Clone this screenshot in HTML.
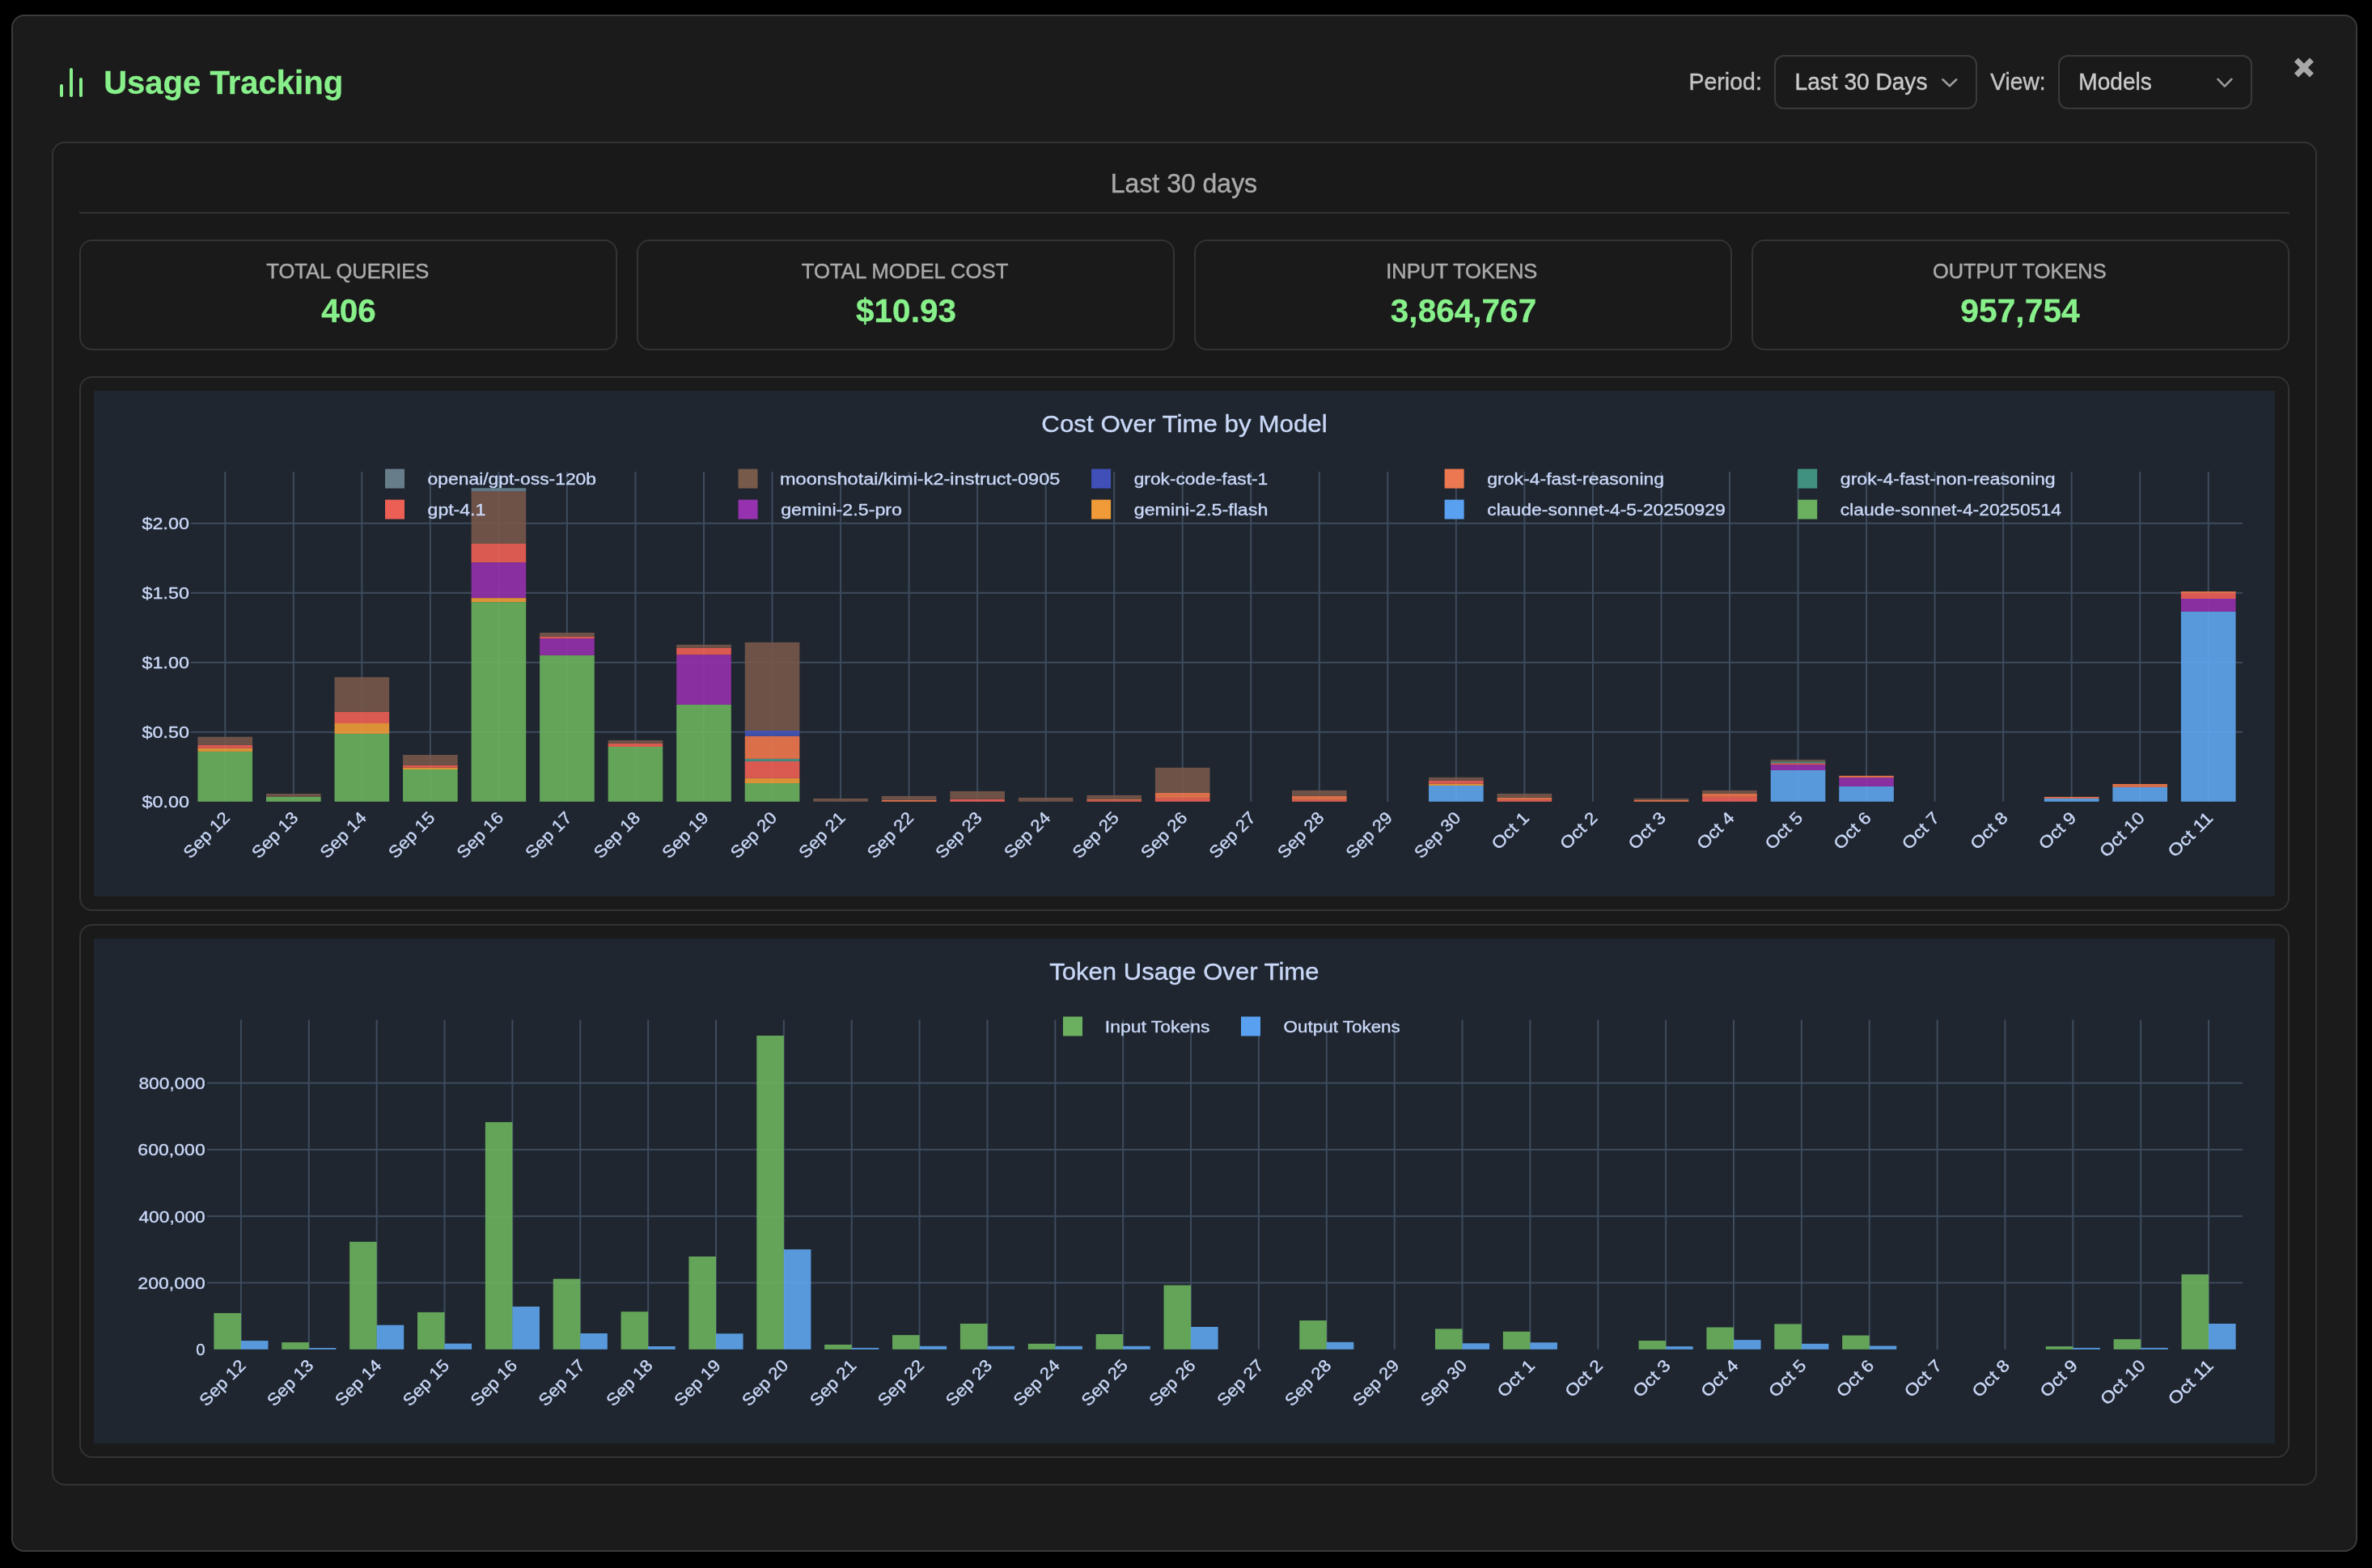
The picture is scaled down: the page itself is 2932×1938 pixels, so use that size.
<!DOCTYPE html>
<html><head><meta charset="utf-8"><title>Usage Tracking</title>
<style>
html,body{margin:0;padding:0;background:#000000;width:2932px;height:1938px;overflow:hidden;font-family:"Liberation Sans",sans-serif}
.box{position:absolute;box-sizing:border-box}
.modal{left:14px;top:18px;width:2900px;height:1900px;background:#1b1b1b;border:2px solid #3a3a3a;border-radius:16px}
.cont{left:64px;top:175px;width:2800px;height:1661px;background:#191919;border:2px solid #333333;border-radius:16px}
.divider{left:98px;top:262px;width:2732px;height:2px;background:#333333}
.card{top:296px;width:665px;height:137px;background:#1a1a1a;border:2px solid #333333;border-radius:16px}
.chart{left:98px;width:2732px;background:#1a1a1a;border:2px solid #333333;border-radius:16px}
.sel{top:68px;height:67px;background:#1a1a1a;border:2px solid #3a3a3a;border-radius:12px}
svg{position:absolute;left:0;top:0;will-change:transform}
text{font-family:"Liberation Sans"}
.ct{stroke:#cad8f8;stroke-width:0.35px}
</style></head><body>
<div class="box modal"></div>
<div class="box sel" style="left:2193px;width:251px"></div>
<div class="box sel" style="left:2544px;width:240px"></div>
<div class="box cont"></div>
<div class="box divider"></div>
<div class="box card" style="left:98px"></div>
<div class="box card" style="left:787px"></div>
<div class="box card" style="left:1476px"></div>
<div class="box card" style="left:2165px"></div>
<div class="box chart" style="top:465px;height:661px"></div>
<div class="box chart" style="top:1142px;height:660px"></div>
<svg width="2932" height="1938" viewBox="0 0 2932 1938">
<rect x="116" y="483" width="2696" height="625" fill="#1f2630"/>
<rect x="236.00" y="903.80" width="2536.00" height="2" fill="#3d4b5d"/>
<rect x="236.00" y="817.80" width="2536.00" height="2" fill="#3d4b5d"/>
<rect x="236.00" y="731.80" width="2536.00" height="2" fill="#3d4b5d"/>
<rect x="236.00" y="645.80" width="2536.00" height="2" fill="#3d4b5d"/>
<rect x="277.27" y="583" width="2" height="407.80" fill="#3d4b5d"/>
<rect x="361.80" y="583" width="2" height="407.80" fill="#3d4b5d"/>
<rect x="446.33" y="583" width="2" height="407.80" fill="#3d4b5d"/>
<rect x="530.87" y="583" width="2" height="407.80" fill="#3d4b5d"/>
<rect x="615.40" y="583" width="2" height="407.80" fill="#3d4b5d"/>
<rect x="699.93" y="583" width="2" height="407.80" fill="#3d4b5d"/>
<rect x="784.47" y="583" width="2" height="407.80" fill="#3d4b5d"/>
<rect x="869.00" y="583" width="2" height="407.80" fill="#3d4b5d"/>
<rect x="953.53" y="583" width="2" height="407.80" fill="#3d4b5d"/>
<rect x="1038.07" y="583" width="2" height="407.80" fill="#3d4b5d"/>
<rect x="1122.60" y="583" width="2" height="407.80" fill="#3d4b5d"/>
<rect x="1207.13" y="583" width="2" height="407.80" fill="#3d4b5d"/>
<rect x="1291.67" y="583" width="2" height="407.80" fill="#3d4b5d"/>
<rect x="1376.20" y="583" width="2" height="407.80" fill="#3d4b5d"/>
<rect x="1460.73" y="583" width="2" height="407.80" fill="#3d4b5d"/>
<rect x="1545.27" y="583" width="2" height="407.80" fill="#3d4b5d"/>
<rect x="1629.80" y="583" width="2" height="407.80" fill="#3d4b5d"/>
<rect x="1714.33" y="583" width="2" height="407.80" fill="#3d4b5d"/>
<rect x="1798.87" y="583" width="2" height="407.80" fill="#3d4b5d"/>
<rect x="1883.40" y="583" width="2" height="407.80" fill="#3d4b5d"/>
<rect x="1967.93" y="583" width="2" height="407.80" fill="#3d4b5d"/>
<rect x="2052.47" y="583" width="2" height="407.80" fill="#3d4b5d"/>
<rect x="2137.00" y="583" width="2" height="407.80" fill="#3d4b5d"/>
<rect x="2221.53" y="583" width="2" height="407.80" fill="#3d4b5d"/>
<rect x="2306.07" y="583" width="2" height="407.80" fill="#3d4b5d"/>
<rect x="2390.60" y="583" width="2" height="407.80" fill="#3d4b5d"/>
<rect x="2475.13" y="583" width="2" height="407.80" fill="#3d4b5d"/>
<rect x="2559.67" y="583" width="2" height="407.80" fill="#3d4b5d"/>
<rect x="2644.20" y="583" width="2" height="407.80" fill="#3d4b5d"/>
<rect x="2728.73" y="583" width="2" height="407.80" fill="#3d4b5d"/>
<rect x="244.45" y="928.90" width="67.63" height="61.90" fill="#6bb25e" fill-opacity="0.9"/>
<rect x="244.45" y="924.80" width="67.63" height="4.10" fill="#f19d38" fill-opacity="0.9"/>
<rect x="244.45" y="920.80" width="67.63" height="4.00" fill="#ee6056" fill-opacity="0.9"/>
<rect x="244.45" y="910.70" width="67.63" height="10.10" fill="#77584b" fill-opacity="0.9"/>
<rect x="328.99" y="984.90" width="67.63" height="5.90" fill="#6bb25e" fill-opacity="0.9"/>
<rect x="328.99" y="981.00" width="67.63" height="3.90" fill="#77584b" fill-opacity="0.9"/>
<rect x="413.52" y="906.90" width="67.63" height="83.90" fill="#6bb25e" fill-opacity="0.9"/>
<rect x="413.52" y="894.00" width="67.63" height="12.90" fill="#f19d38" fill-opacity="0.9"/>
<rect x="413.52" y="879.90" width="67.63" height="14.10" fill="#ee6056" fill-opacity="0.9"/>
<rect x="413.52" y="836.90" width="67.63" height="43.00" fill="#77584b" fill-opacity="0.9"/>
<rect x="498.05" y="951.00" width="67.63" height="39.80" fill="#6bb25e" fill-opacity="0.9"/>
<rect x="498.05" y="948.70" width="67.63" height="2.30" fill="#f19d38" fill-opacity="0.9"/>
<rect x="498.05" y="945.70" width="67.63" height="3.00" fill="#ee6056" fill-opacity="0.9"/>
<rect x="498.05" y="933.00" width="67.63" height="12.70" fill="#77584b" fill-opacity="0.9"/>
<rect x="582.59" y="744.10" width="67.63" height="246.70" fill="#6bb25e" fill-opacity="0.9"/>
<rect x="582.59" y="739.10" width="67.63" height="5.00" fill="#f19d38" fill-opacity="0.9"/>
<rect x="582.59" y="695.10" width="67.63" height="44.00" fill="#9531ac" fill-opacity="0.9"/>
<rect x="582.59" y="672.00" width="67.63" height="23.10" fill="#ee6056" fill-opacity="0.9"/>
<rect x="582.59" y="607.20" width="67.63" height="64.80" fill="#77584b" fill-opacity="0.9"/>
<rect x="582.59" y="603.20" width="67.63" height="4.00" fill="#678191" fill-opacity="0.9"/>
<rect x="667.12" y="809.90" width="67.63" height="180.90" fill="#6bb25e" fill-opacity="0.9"/>
<rect x="667.12" y="789.10" width="67.63" height="20.80" fill="#9531ac" fill-opacity="0.9"/>
<rect x="667.12" y="786.90" width="67.63" height="2.20" fill="#ee6056" fill-opacity="0.9"/>
<rect x="667.12" y="782.00" width="67.63" height="4.90" fill="#77584b" fill-opacity="0.9"/>
<rect x="751.65" y="923.00" width="67.63" height="67.80" fill="#6bb25e" fill-opacity="0.9"/>
<rect x="751.65" y="918.90" width="67.63" height="4.10" fill="#ee6056" fill-opacity="0.9"/>
<rect x="751.65" y="914.90" width="67.63" height="4.00" fill="#77584b" fill-opacity="0.9"/>
<rect x="836.19" y="870.90" width="67.63" height="119.90" fill="#6bb25e" fill-opacity="0.9"/>
<rect x="836.19" y="809.20" width="67.63" height="61.70" fill="#9531ac" fill-opacity="0.9"/>
<rect x="836.19" y="800.80" width="67.63" height="8.40" fill="#ee6056" fill-opacity="0.9"/>
<rect x="836.19" y="796.80" width="67.63" height="4.00" fill="#77584b" fill-opacity="0.9"/>
<rect x="920.72" y="968.00" width="67.63" height="22.80" fill="#6bb25e" fill-opacity="0.9"/>
<rect x="920.72" y="961.80" width="67.63" height="6.20" fill="#f19d38" fill-opacity="0.9"/>
<rect x="920.72" y="940.90" width="67.63" height="20.90" fill="#ee6056" fill-opacity="0.9"/>
<rect x="920.72" y="937.90" width="67.63" height="3.00" fill="#479789" fill-opacity="0.9"/>
<rect x="920.72" y="909.80" width="67.63" height="28.10" fill="#ee784e" fill-opacity="0.9"/>
<rect x="920.72" y="903.00" width="67.63" height="6.80" fill="#4455b8" fill-opacity="0.9"/>
<rect x="920.72" y="793.90" width="67.63" height="109.10" fill="#77584b" fill-opacity="0.9"/>
<rect x="1005.25" y="986.90" width="67.63" height="3.90" fill="#77584b" fill-opacity="0.9"/>
<rect x="1089.79" y="988.80" width="67.63" height="2.00" fill="#ee784e" fill-opacity="0.9"/>
<rect x="1089.79" y="983.90" width="67.63" height="4.90" fill="#77584b" fill-opacity="0.9"/>
<rect x="1174.32" y="987.80" width="67.63" height="3.00" fill="#ee6056" fill-opacity="0.9"/>
<rect x="1174.32" y="977.90" width="67.63" height="9.90" fill="#77584b" fill-opacity="0.9"/>
<rect x="1258.85" y="985.90" width="67.63" height="4.90" fill="#77584b" fill-opacity="0.9"/>
<rect x="1343.39" y="989.30" width="67.63" height="1.50" fill="#ee6056" fill-opacity="0.9"/>
<rect x="1343.39" y="987.80" width="67.63" height="1.50" fill="#ee784e" fill-opacity="0.9"/>
<rect x="1343.39" y="982.90" width="67.63" height="4.90" fill="#77584b" fill-opacity="0.9"/>
<rect x="1427.92" y="986.80" width="67.63" height="4.00" fill="#ee6056" fill-opacity="0.9"/>
<rect x="1427.92" y="979.90" width="67.63" height="6.90" fill="#ee784e" fill-opacity="0.9"/>
<rect x="1427.92" y="948.80" width="67.63" height="31.10" fill="#77584b" fill-opacity="0.9"/>
<rect x="1596.99" y="988.80" width="67.63" height="2.00" fill="#ee6056" fill-opacity="0.9"/>
<rect x="1596.99" y="983.90" width="67.63" height="4.90" fill="#ee784e" fill-opacity="0.9"/>
<rect x="1596.99" y="976.90" width="67.63" height="7.00" fill="#77584b" fill-opacity="0.9"/>
<rect x="1766.05" y="971.00" width="67.63" height="19.80" fill="#5ea6ef" fill-opacity="0.9"/>
<rect x="1766.05" y="968.70" width="67.63" height="2.30" fill="#f19d38" fill-opacity="0.9"/>
<rect x="1766.05" y="964.80" width="67.63" height="3.90" fill="#ee6056" fill-opacity="0.9"/>
<rect x="1766.05" y="960.80" width="67.63" height="4.00" fill="#77584b" fill-opacity="0.9"/>
<rect x="1850.59" y="988.80" width="67.63" height="2.00" fill="#ee6056" fill-opacity="0.9"/>
<rect x="1850.59" y="985.90" width="67.63" height="2.90" fill="#ee784e" fill-opacity="0.9"/>
<rect x="1850.59" y="980.90" width="67.63" height="5.00" fill="#77584b" fill-opacity="0.9"/>
<rect x="2019.65" y="988.80" width="67.63" height="2.00" fill="#ee784e" fill-opacity="0.9"/>
<rect x="2019.65" y="986.80" width="67.63" height="2.00" fill="#77584b" fill-opacity="0.9"/>
<rect x="2104.19" y="984.90" width="67.63" height="5.90" fill="#ee6056" fill-opacity="0.9"/>
<rect x="2104.19" y="980.80" width="67.63" height="4.10" fill="#ee784e" fill-opacity="0.9"/>
<rect x="2104.19" y="976.90" width="67.63" height="3.90" fill="#77584b" fill-opacity="0.9"/>
<rect x="2188.72" y="952.00" width="67.63" height="38.80" fill="#5ea6ef" fill-opacity="0.9"/>
<rect x="2188.72" y="945.10" width="67.63" height="6.90" fill="#9531ac" fill-opacity="0.9"/>
<rect x="2188.72" y="943.20" width="67.63" height="1.90" fill="#ee6056" fill-opacity="0.9"/>
<rect x="2188.72" y="941.20" width="67.63" height="2.00" fill="#479789" fill-opacity="0.9"/>
<rect x="2188.72" y="938.90" width="67.63" height="2.30" fill="#77584b" fill-opacity="0.9"/>
<rect x="2273.25" y="971.90" width="67.63" height="18.90" fill="#5ea6ef" fill-opacity="0.9"/>
<rect x="2273.25" y="961.10" width="67.63" height="10.80" fill="#9531ac" fill-opacity="0.9"/>
<rect x="2273.25" y="958.80" width="67.63" height="2.30" fill="#ee784e" fill-opacity="0.9"/>
<rect x="2526.85" y="986.90" width="67.63" height="3.90" fill="#5ea6ef" fill-opacity="0.9"/>
<rect x="2526.85" y="984.90" width="67.63" height="2.00" fill="#ee784e" fill-opacity="0.9"/>
<rect x="2611.39" y="972.90" width="67.63" height="17.90" fill="#5ea6ef" fill-opacity="0.9"/>
<rect x="2611.39" y="969.00" width="67.63" height="3.90" fill="#ee784e" fill-opacity="0.9"/>
<rect x="2695.92" y="755.90" width="67.63" height="234.90" fill="#5ea6ef" fill-opacity="0.9"/>
<rect x="2695.92" y="740.00" width="67.63" height="15.90" fill="#9531ac" fill-opacity="0.9"/>
<rect x="2695.92" y="733.00" width="67.63" height="7.00" fill="#ee6056" fill-opacity="0.9"/>
<rect x="2695.92" y="731.00" width="67.63" height="2.00" fill="#ee784e" fill-opacity="0.9"/>
<rect x="116" y="1160" width="2696" height="624" fill="#1f2630"/>
<rect x="256.00" y="1584.50" width="2516.00" height="2" fill="#3d4b5d"/>
<rect x="256.00" y="1502.20" width="2516.00" height="2" fill="#3d4b5d"/>
<rect x="256.00" y="1419.90" width="2516.00" height="2" fill="#3d4b5d"/>
<rect x="256.00" y="1337.60" width="2516.00" height="2" fill="#3d4b5d"/>
<rect x="296.93" y="1260.3" width="2" height="407.50" fill="#3d4b5d"/>
<rect x="380.80" y="1260.3" width="2" height="407.50" fill="#3d4b5d"/>
<rect x="464.67" y="1260.3" width="2" height="407.50" fill="#3d4b5d"/>
<rect x="548.53" y="1260.3" width="2" height="407.50" fill="#3d4b5d"/>
<rect x="632.40" y="1260.3" width="2" height="407.50" fill="#3d4b5d"/>
<rect x="716.27" y="1260.3" width="2" height="407.50" fill="#3d4b5d"/>
<rect x="800.13" y="1260.3" width="2" height="407.50" fill="#3d4b5d"/>
<rect x="884.00" y="1260.3" width="2" height="407.50" fill="#3d4b5d"/>
<rect x="967.87" y="1260.3" width="2" height="407.50" fill="#3d4b5d"/>
<rect x="1051.73" y="1260.3" width="2" height="407.50" fill="#3d4b5d"/>
<rect x="1135.60" y="1260.3" width="2" height="407.50" fill="#3d4b5d"/>
<rect x="1219.47" y="1260.3" width="2" height="407.50" fill="#3d4b5d"/>
<rect x="1303.33" y="1260.3" width="2" height="407.50" fill="#3d4b5d"/>
<rect x="1387.20" y="1260.3" width="2" height="407.50" fill="#3d4b5d"/>
<rect x="1471.07" y="1260.3" width="2" height="407.50" fill="#3d4b5d"/>
<rect x="1554.93" y="1260.3" width="2" height="407.50" fill="#3d4b5d"/>
<rect x="1638.80" y="1260.3" width="2" height="407.50" fill="#3d4b5d"/>
<rect x="1722.67" y="1260.3" width="2" height="407.50" fill="#3d4b5d"/>
<rect x="1806.53" y="1260.3" width="2" height="407.50" fill="#3d4b5d"/>
<rect x="1890.40" y="1260.3" width="2" height="407.50" fill="#3d4b5d"/>
<rect x="1974.27" y="1260.3" width="2" height="407.50" fill="#3d4b5d"/>
<rect x="2058.13" y="1260.3" width="2" height="407.50" fill="#3d4b5d"/>
<rect x="2142.00" y="1260.3" width="2" height="407.50" fill="#3d4b5d"/>
<rect x="2225.87" y="1260.3" width="2" height="407.50" fill="#3d4b5d"/>
<rect x="2309.73" y="1260.3" width="2" height="407.50" fill="#3d4b5d"/>
<rect x="2393.60" y="1260.3" width="2" height="407.50" fill="#3d4b5d"/>
<rect x="2477.47" y="1260.3" width="2" height="407.50" fill="#3d4b5d"/>
<rect x="2561.33" y="1260.3" width="2" height="407.50" fill="#3d4b5d"/>
<rect x="2645.20" y="1260.3" width="2" height="407.50" fill="#3d4b5d"/>
<rect x="2729.07" y="1260.3" width="2" height="407.50" fill="#3d4b5d"/>
<rect x="264.39" y="1622.90" width="33.55" height="44.90" fill="#6bb25e" fill-opacity="0.9"/>
<rect x="297.93" y="1657.10" width="33.55" height="10.70" fill="#5ea6ef" fill-opacity="0.9"/>
<rect x="348.25" y="1659.10" width="33.55" height="8.70" fill="#6bb25e" fill-opacity="0.9"/>
<rect x="381.80" y="1666.00" width="33.55" height="1.80" fill="#5ea6ef" fill-opacity="0.9"/>
<rect x="432.12" y="1534.80" width="33.55" height="133.00" fill="#6bb25e" fill-opacity="0.9"/>
<rect x="465.67" y="1637.70" width="33.55" height="30.10" fill="#5ea6ef" fill-opacity="0.9"/>
<rect x="515.99" y="1621.90" width="33.55" height="45.90" fill="#6bb25e" fill-opacity="0.9"/>
<rect x="549.53" y="1660.60" width="33.55" height="7.20" fill="#5ea6ef" fill-opacity="0.9"/>
<rect x="599.85" y="1386.90" width="33.55" height="280.90" fill="#6bb25e" fill-opacity="0.9"/>
<rect x="633.40" y="1614.90" width="33.55" height="52.90" fill="#5ea6ef" fill-opacity="0.9"/>
<rect x="683.72" y="1580.60" width="33.55" height="87.20" fill="#6bb25e" fill-opacity="0.9"/>
<rect x="717.27" y="1648.00" width="33.55" height="19.80" fill="#5ea6ef" fill-opacity="0.9"/>
<rect x="767.59" y="1621.20" width="33.55" height="46.60" fill="#6bb25e" fill-opacity="0.9"/>
<rect x="801.13" y="1664.00" width="33.55" height="3.80" fill="#5ea6ef" fill-opacity="0.9"/>
<rect x="851.45" y="1553.00" width="33.55" height="114.80" fill="#6bb25e" fill-opacity="0.9"/>
<rect x="885.00" y="1648.30" width="33.55" height="19.50" fill="#5ea6ef" fill-opacity="0.9"/>
<rect x="935.32" y="1280.00" width="33.55" height="387.80" fill="#6bb25e" fill-opacity="0.9"/>
<rect x="968.87" y="1544.20" width="33.55" height="123.60" fill="#5ea6ef" fill-opacity="0.9"/>
<rect x="1019.19" y="1661.90" width="33.55" height="5.90" fill="#6bb25e" fill-opacity="0.9"/>
<rect x="1052.73" y="1665.90" width="33.55" height="1.90" fill="#5ea6ef" fill-opacity="0.9"/>
<rect x="1103.05" y="1650.10" width="33.55" height="17.70" fill="#6bb25e" fill-opacity="0.9"/>
<rect x="1136.60" y="1663.80" width="33.55" height="4.00" fill="#5ea6ef" fill-opacity="0.9"/>
<rect x="1186.92" y="1636.00" width="33.55" height="31.80" fill="#6bb25e" fill-opacity="0.9"/>
<rect x="1220.47" y="1663.80" width="33.55" height="4.00" fill="#5ea6ef" fill-opacity="0.9"/>
<rect x="1270.79" y="1660.80" width="33.55" height="7.00" fill="#6bb25e" fill-opacity="0.9"/>
<rect x="1304.33" y="1663.80" width="33.55" height="4.00" fill="#5ea6ef" fill-opacity="0.9"/>
<rect x="1354.65" y="1649.00" width="33.55" height="18.80" fill="#6bb25e" fill-opacity="0.9"/>
<rect x="1388.20" y="1663.80" width="33.55" height="4.00" fill="#5ea6ef" fill-opacity="0.9"/>
<rect x="1438.52" y="1588.50" width="33.55" height="79.30" fill="#6bb25e" fill-opacity="0.9"/>
<rect x="1472.07" y="1640.00" width="33.55" height="27.80" fill="#5ea6ef" fill-opacity="0.9"/>
<rect x="1606.25" y="1632.10" width="33.55" height="35.70" fill="#6bb25e" fill-opacity="0.9"/>
<rect x="1639.80" y="1658.80" width="33.55" height="9.00" fill="#5ea6ef" fill-opacity="0.9"/>
<rect x="1773.99" y="1642.40" width="33.55" height="25.40" fill="#6bb25e" fill-opacity="0.9"/>
<rect x="1807.53" y="1660.30" width="33.55" height="7.50" fill="#5ea6ef" fill-opacity="0.9"/>
<rect x="1857.85" y="1645.80" width="33.55" height="22.00" fill="#6bb25e" fill-opacity="0.9"/>
<rect x="1891.40" y="1659.30" width="33.55" height="8.50" fill="#5ea6ef" fill-opacity="0.9"/>
<rect x="2025.59" y="1657.00" width="33.55" height="10.80" fill="#6bb25e" fill-opacity="0.9"/>
<rect x="2059.13" y="1664.10" width="33.55" height="3.70" fill="#5ea6ef" fill-opacity="0.9"/>
<rect x="2109.45" y="1640.50" width="33.55" height="27.30" fill="#6bb25e" fill-opacity="0.9"/>
<rect x="2143.00" y="1656.10" width="33.55" height="11.70" fill="#5ea6ef" fill-opacity="0.9"/>
<rect x="2193.32" y="1636.40" width="33.55" height="31.40" fill="#6bb25e" fill-opacity="0.9"/>
<rect x="2226.87" y="1660.80" width="33.55" height="7.00" fill="#5ea6ef" fill-opacity="0.9"/>
<rect x="2277.19" y="1650.50" width="33.55" height="17.30" fill="#6bb25e" fill-opacity="0.9"/>
<rect x="2310.73" y="1663.50" width="33.55" height="4.30" fill="#5ea6ef" fill-opacity="0.9"/>
<rect x="2528.79" y="1664.10" width="33.55" height="3.70" fill="#6bb25e" fill-opacity="0.9"/>
<rect x="2562.33" y="1665.90" width="33.55" height="1.90" fill="#5ea6ef" fill-opacity="0.9"/>
<rect x="2612.65" y="1655.20" width="33.55" height="12.60" fill="#6bb25e" fill-opacity="0.9"/>
<rect x="2646.20" y="1665.90" width="33.55" height="1.90" fill="#5ea6ef" fill-opacity="0.9"/>
<rect x="2696.52" y="1575.10" width="33.55" height="92.70" fill="#6bb25e" fill-opacity="0.9"/>
<rect x="2730.07" y="1636.00" width="33.55" height="31.80" fill="#5ea6ef" fill-opacity="0.9"/>
<g stroke="#87f08a" stroke-width="4" stroke-linecap="round" fill="none"><line x1="76" y1="118" x2="76" y2="106"/><line x1="88" y1="118" x2="88" y2="86"/><line x1="100" y1="118" x2="100" y2="98"/></g>
<text x="128.17" y="116.20" font-size="41.5" font-weight="bold" fill="#87f08a" textLength="296.00" lengthAdjust="spacingAndGlyphs" stroke="#87f08a" stroke-width="0.3">Usage Tracking</text>
<text x="2087.53" y="111.30" font-size="29" font-weight="normal" fill="#c4c4c4" textLength="90.29" lengthAdjust="spacingAndGlyphs" stroke="#c4c4c4" stroke-width="0.4">Period:</text>
<text x="2218.56" y="111.30" font-size="29" font-weight="normal" fill="#cacaca" textLength="163.92" lengthAdjust="spacingAndGlyphs" stroke="#cacaca" stroke-width="0.4">Last 30 Days</text>
<text x="2460.20" y="111.30" font-size="29" font-weight="normal" fill="#c4c4c4" textLength="68.40" lengthAdjust="spacingAndGlyphs" stroke="#c4c4c4" stroke-width="0.4">View:</text>
<text x="2569.36" y="111.30" font-size="29" font-weight="normal" fill="#cacaca" textLength="90.52" lengthAdjust="spacingAndGlyphs" stroke="#cacaca" stroke-width="0.4">Models</text>
<polyline points="2401.4,98.3 2409.9,106.3 2418.3,98.3" fill="none" stroke="#9a9a9a" stroke-width="2.6" stroke-linecap="round" stroke-linejoin="round"/>
<polyline points="2741.5,97.9 2749.9,106.6 2758.4,97.9" fill="none" stroke="#9a9a9a" stroke-width="2.6" stroke-linecap="round" stroke-linejoin="round"/>
<polygon points="2835.95,76.50 2840.90,71.60 2847.90,78.40 2855.00,71.60 2859.90,76.50 2852.90,83.50 2859.90,90.60 2855.00,95.50 2847.90,88.70 2840.90,95.50 2835.95,90.60 2842.90,83.50" fill="#a8a8a8"/>
<text x="1372.83" y="238.40" font-size="32.4" font-weight="normal" fill="#aaaaaa" textLength="181.27" lengthAdjust="spacingAndGlyphs" stroke="#aaaaaa" stroke-width="0.4">Last 30 days</text>
<text x="329.34" y="344.40" font-size="25" font-weight="normal" fill="#aaaaaa" textLength="201.00" lengthAdjust="spacingAndGlyphs" stroke="#aaaaaa" stroke-width="0.45">TOTAL QUERIES</text>
<text x="397.26" y="398.10" font-size="41.5" font-weight="bold" fill="#87f08a" textLength="67.53" lengthAdjust="spacingAndGlyphs" stroke="#87f08a" stroke-width="0.3">406</text>
<text x="990.84" y="344.40" font-size="25" font-weight="normal" fill="#aaaaaa" textLength="255.60" lengthAdjust="spacingAndGlyphs" stroke="#aaaaaa" stroke-width="0.45">TOTAL MODEL COST</text>
<text x="1058.04" y="398.10" font-size="41.5" font-weight="bold" fill="#87f08a" textLength="123.97" lengthAdjust="spacingAndGlyphs" stroke="#87f08a" stroke-width="0.3">$10.93</text>
<text x="1713.26" y="344.40" font-size="25" font-weight="normal" fill="#aaaaaa" textLength="187.13" lengthAdjust="spacingAndGlyphs" stroke="#aaaaaa" stroke-width="0.45">INPUT TOKENS</text>
<text x="1718.82" y="398.10" font-size="41.5" font-weight="bold" fill="#87f08a" textLength="180.41" lengthAdjust="spacingAndGlyphs" stroke="#87f08a" stroke-width="0.3">3,864,767</text>
<text x="2388.95" y="344.40" font-size="25" font-weight="normal" fill="#aaaaaa" textLength="214.77" lengthAdjust="spacingAndGlyphs" stroke="#aaaaaa" stroke-width="0.45">OUTPUT TOKENS</text>
<text x="2423.26" y="398.10" font-size="41.5" font-weight="bold" fill="#87f08a" textLength="147.57" lengthAdjust="spacingAndGlyphs" stroke="#87f08a" stroke-width="0.3">957,754</text>
<text x="175.49" y="998.00" font-size="21" font-weight="normal" fill="#cad8f8" textLength="58.47" lengthAdjust="spacingAndGlyphs" stroke="#cad8f8" stroke-width="0.35">$0.00</text>
<text x="175.49" y="912.00" font-size="21" font-weight="normal" fill="#cad8f8" textLength="58.47" lengthAdjust="spacingAndGlyphs" stroke="#cad8f8" stroke-width="0.35">$0.50</text>
<text x="175.49" y="826.00" font-size="21" font-weight="normal" fill="#cad8f8" textLength="58.47" lengthAdjust="spacingAndGlyphs" stroke="#cad8f8" stroke-width="0.35">$1.00</text>
<text x="175.49" y="740.00" font-size="21" font-weight="normal" fill="#cad8f8" textLength="58.47" lengthAdjust="spacingAndGlyphs" stroke="#cad8f8" stroke-width="0.35">$1.50</text>
<text x="175.49" y="654.00" font-size="21" font-weight="normal" fill="#cad8f8" textLength="58.47" lengthAdjust="spacingAndGlyphs" stroke="#cad8f8" stroke-width="0.35">$2.00</text>
<text transform="translate(285.27,1012.10) rotate(-45)" text-anchor="end" font-size="21" fill="#cad8f8" stroke="#cad8f8" stroke-width="0.35" textLength="70.76" lengthAdjust="spacingAndGlyphs">Sep 12</text>
<text transform="translate(369.80,1012.10) rotate(-45)" text-anchor="end" font-size="21" fill="#cad8f8" stroke="#cad8f8" stroke-width="0.35" textLength="70.76" lengthAdjust="spacingAndGlyphs">Sep 13</text>
<text transform="translate(454.33,1012.10) rotate(-45)" text-anchor="end" font-size="21" fill="#cad8f8" stroke="#cad8f8" stroke-width="0.35" textLength="70.70" lengthAdjust="spacingAndGlyphs">Sep 14</text>
<text transform="translate(538.87,1012.10) rotate(-45)" text-anchor="end" font-size="21" fill="#cad8f8" stroke="#cad8f8" stroke-width="0.35" textLength="70.76" lengthAdjust="spacingAndGlyphs">Sep 15</text>
<text transform="translate(623.40,1012.10) rotate(-45)" text-anchor="end" font-size="21" fill="#cad8f8" stroke="#cad8f8" stroke-width="0.35" textLength="70.76" lengthAdjust="spacingAndGlyphs">Sep 16</text>
<text transform="translate(707.93,1012.10) rotate(-45)" text-anchor="end" font-size="21" fill="#cad8f8" stroke="#cad8f8" stroke-width="0.35" textLength="70.76" lengthAdjust="spacingAndGlyphs">Sep 17</text>
<text transform="translate(792.47,1012.10) rotate(-45)" text-anchor="end" font-size="21" fill="#cad8f8" stroke="#cad8f8" stroke-width="0.35" textLength="70.76" lengthAdjust="spacingAndGlyphs">Sep 18</text>
<text transform="translate(877.00,1012.10) rotate(-45)" text-anchor="end" font-size="21" fill="#cad8f8" stroke="#cad8f8" stroke-width="0.35" textLength="70.76" lengthAdjust="spacingAndGlyphs">Sep 19</text>
<text transform="translate(961.53,1012.10) rotate(-45)" text-anchor="end" font-size="21" fill="#cad8f8" stroke="#cad8f8" stroke-width="0.35" textLength="70.76" lengthAdjust="spacingAndGlyphs">Sep 20</text>
<text transform="translate(1046.07,1012.10) rotate(-45)" text-anchor="end" font-size="21" fill="#cad8f8" stroke="#cad8f8" stroke-width="0.35" textLength="70.76" lengthAdjust="spacingAndGlyphs">Sep 21</text>
<text transform="translate(1130.60,1012.10) rotate(-45)" text-anchor="end" font-size="21" fill="#cad8f8" stroke="#cad8f8" stroke-width="0.35" textLength="70.76" lengthAdjust="spacingAndGlyphs">Sep 22</text>
<text transform="translate(1215.13,1012.10) rotate(-45)" text-anchor="end" font-size="21" fill="#cad8f8" stroke="#cad8f8" stroke-width="0.35" textLength="70.76" lengthAdjust="spacingAndGlyphs">Sep 23</text>
<text transform="translate(1299.67,1012.10) rotate(-45)" text-anchor="end" font-size="21" fill="#cad8f8" stroke="#cad8f8" stroke-width="0.35" textLength="70.70" lengthAdjust="spacingAndGlyphs">Sep 24</text>
<text transform="translate(1384.20,1012.10) rotate(-45)" text-anchor="end" font-size="21" fill="#cad8f8" stroke="#cad8f8" stroke-width="0.35" textLength="70.76" lengthAdjust="spacingAndGlyphs">Sep 25</text>
<text transform="translate(1468.73,1012.10) rotate(-45)" text-anchor="end" font-size="21" fill="#cad8f8" stroke="#cad8f8" stroke-width="0.35" textLength="70.76" lengthAdjust="spacingAndGlyphs">Sep 26</text>
<text transform="translate(1553.27,1012.10) rotate(-45)" text-anchor="end" font-size="21" fill="#cad8f8" stroke="#cad8f8" stroke-width="0.35" textLength="70.76" lengthAdjust="spacingAndGlyphs">Sep 27</text>
<text transform="translate(1637.80,1012.10) rotate(-45)" text-anchor="end" font-size="21" fill="#cad8f8" stroke="#cad8f8" stroke-width="0.35" textLength="70.76" lengthAdjust="spacingAndGlyphs">Sep 28</text>
<text transform="translate(1722.33,1012.10) rotate(-45)" text-anchor="end" font-size="21" fill="#cad8f8" stroke="#cad8f8" stroke-width="0.35" textLength="70.76" lengthAdjust="spacingAndGlyphs">Sep 29</text>
<text transform="translate(1806.87,1012.10) rotate(-45)" text-anchor="end" font-size="21" fill="#cad8f8" stroke="#cad8f8" stroke-width="0.35" textLength="70.76" lengthAdjust="spacingAndGlyphs">Sep 30</text>
<text transform="translate(1891.40,1012.10) rotate(-45)" text-anchor="end" font-size="21" fill="#cad8f8" stroke="#cad8f8" stroke-width="0.35" textLength="55.42" lengthAdjust="spacingAndGlyphs">Oct 1</text>
<text transform="translate(1975.93,1012.10) rotate(-45)" text-anchor="end" font-size="21" fill="#cad8f8" stroke="#cad8f8" stroke-width="0.35" textLength="55.42" lengthAdjust="spacingAndGlyphs">Oct 2</text>
<text transform="translate(2060.47,1012.10) rotate(-45)" text-anchor="end" font-size="21" fill="#cad8f8" stroke="#cad8f8" stroke-width="0.35" textLength="55.42" lengthAdjust="spacingAndGlyphs">Oct 3</text>
<text transform="translate(2145.00,1012.10) rotate(-45)" text-anchor="end" font-size="21" fill="#cad8f8" stroke="#cad8f8" stroke-width="0.35" textLength="55.32" lengthAdjust="spacingAndGlyphs">Oct 4</text>
<text transform="translate(2229.53,1012.10) rotate(-45)" text-anchor="end" font-size="21" fill="#cad8f8" stroke="#cad8f8" stroke-width="0.35" textLength="55.42" lengthAdjust="spacingAndGlyphs">Oct 5</text>
<text transform="translate(2314.07,1012.10) rotate(-45)" text-anchor="end" font-size="21" fill="#cad8f8" stroke="#cad8f8" stroke-width="0.35" textLength="55.42" lengthAdjust="spacingAndGlyphs">Oct 6</text>
<text transform="translate(2398.60,1012.10) rotate(-45)" text-anchor="end" font-size="21" fill="#cad8f8" stroke="#cad8f8" stroke-width="0.35" textLength="55.42" lengthAdjust="spacingAndGlyphs">Oct 7</text>
<text transform="translate(2483.13,1012.10) rotate(-45)" text-anchor="end" font-size="21" fill="#cad8f8" stroke="#cad8f8" stroke-width="0.35" textLength="55.42" lengthAdjust="spacingAndGlyphs">Oct 8</text>
<text transform="translate(2567.67,1012.10) rotate(-45)" text-anchor="end" font-size="21" fill="#cad8f8" stroke="#cad8f8" stroke-width="0.35" textLength="55.42" lengthAdjust="spacingAndGlyphs">Oct 9</text>
<text transform="translate(2652.20,1012.10) rotate(-45)" text-anchor="end" font-size="21" fill="#cad8f8" stroke="#cad8f8" stroke-width="0.35" textLength="68.66" lengthAdjust="spacingAndGlyphs">Oct 10</text>
<text transform="translate(2736.73,1012.10) rotate(-45)" text-anchor="end" font-size="21" fill="#cad8f8" stroke="#cad8f8" stroke-width="0.35" textLength="68.71" lengthAdjust="spacingAndGlyphs">Oct 11</text>
<text x="1287.34" y="534.10" font-size="29.5" font-weight="normal" fill="#cad8f8" textLength="353.41" lengthAdjust="spacingAndGlyphs" stroke="#cad8f8" stroke-width="0.35">Cost Over Time by Model</text>
<rect x="476.00" y="579.6" width="24" height="24" fill="#687d8a"/>
<text x="528.60" y="598.90" font-size="20" font-weight="normal" fill="#cad8f8" textLength="208.44" lengthAdjust="spacingAndGlyphs" stroke="#cad8f8" stroke-width="0.35">openai/gpt-oss-120b</text>
<rect x="912.55" y="579.6" width="24" height="24" fill="#785a4b"/>
<text x="963.97" y="598.90" font-size="20" font-weight="normal" fill="#cad8f8" textLength="346.32" lengthAdjust="spacingAndGlyphs" stroke="#cad8f8" stroke-width="0.35">moonshotai/kimi-k2-instruct-0905</text>
<rect x="1349.10" y="579.6" width="24" height="24" fill="#4150b9"/>
<text x="1401.70" y="598.90" font-size="20" font-weight="normal" fill="#cad8f8" textLength="165.54" lengthAdjust="spacingAndGlyphs" stroke="#cad8f8" stroke-width="0.35">grok-code-fast-1</text>
<rect x="1785.65" y="579.6" width="24" height="24" fill="#eb7850"/>
<text x="1838.25" y="598.90" font-size="20" font-weight="normal" fill="#cad8f8" textLength="218.89" lengthAdjust="spacingAndGlyphs" stroke="#cad8f8" stroke-width="0.35">grok-4-fast-reasoning</text>
<rect x="2222.20" y="579.6" width="24" height="24" fill="#41917f"/>
<text x="2274.80" y="598.90" font-size="20" font-weight="normal" fill="#cad8f8" textLength="265.80" lengthAdjust="spacingAndGlyphs" stroke="#cad8f8" stroke-width="0.35">grok-4-fast-non-reasoning</text>
<rect x="476.00" y="617.6" width="24" height="24" fill="#eb5f55"/>
<text x="528.60" y="636.90" font-size="20" font-weight="normal" fill="#cad8f8" textLength="71.64" lengthAdjust="spacingAndGlyphs" stroke="#cad8f8" stroke-width="0.35">gpt-4.1</text>
<rect x="912.55" y="617.6" width="24" height="24" fill="#9632af"/>
<text x="965.15" y="636.90" font-size="20" font-weight="normal" fill="#cad8f8" textLength="149.84" lengthAdjust="spacingAndGlyphs" stroke="#cad8f8" stroke-width="0.35">gemini-2.5-pro</text>
<rect x="1349.10" y="617.6" width="24" height="24" fill="#f09b37"/>
<text x="1401.70" y="636.90" font-size="20" font-weight="normal" fill="#cad8f8" textLength="165.71" lengthAdjust="spacingAndGlyphs" stroke="#cad8f8" stroke-width="0.35">gemini-2.5-flash</text>
<rect x="1785.65" y="617.6" width="24" height="24" fill="#5aa0f0"/>
<text x="1838.25" y="636.90" font-size="20" font-weight="normal" fill="#cad8f8" textLength="294.54" lengthAdjust="spacingAndGlyphs" stroke="#cad8f8" stroke-width="0.35">claude-sonnet-4-5-20250929</text>
<rect x="2222.20" y="617.6" width="24" height="24" fill="#6ab05e"/>
<text x="2274.80" y="636.90" font-size="20" font-weight="normal" fill="#cad8f8" textLength="273.04" lengthAdjust="spacingAndGlyphs" stroke="#cad8f8" stroke-width="0.35">claude-sonnet-4-20250514</text>
<text x="242.29" y="1675.20" font-size="21" font-weight="normal" fill="#cad8f8" textLength="11.37" lengthAdjust="spacingAndGlyphs" stroke="#cad8f8" stroke-width="0.35">0</text>
<text x="170.33" y="1592.90" font-size="21" font-weight="normal" fill="#cad8f8" textLength="83.42" lengthAdjust="spacingAndGlyphs" stroke="#cad8f8" stroke-width="0.35">200,000</text>
<text x="171.43" y="1510.60" font-size="21" font-weight="normal" fill="#cad8f8" textLength="82.31" lengthAdjust="spacingAndGlyphs" stroke="#cad8f8" stroke-width="0.35">400,000</text>
<text x="170.33" y="1428.30" font-size="21" font-weight="normal" fill="#cad8f8" textLength="83.42" lengthAdjust="spacingAndGlyphs" stroke="#cad8f8" stroke-width="0.35">600,000</text>
<text x="171.43" y="1346.00" font-size="21" font-weight="normal" fill="#cad8f8" textLength="82.31" lengthAdjust="spacingAndGlyphs" stroke="#cad8f8" stroke-width="0.35">800,000</text>
<text transform="translate(304.93,1689.10) rotate(-45)" text-anchor="end" font-size="21" fill="#cad8f8" stroke="#cad8f8" stroke-width="0.35" textLength="70.76" lengthAdjust="spacingAndGlyphs">Sep 12</text>
<text transform="translate(388.80,1689.10) rotate(-45)" text-anchor="end" font-size="21" fill="#cad8f8" stroke="#cad8f8" stroke-width="0.35" textLength="70.76" lengthAdjust="spacingAndGlyphs">Sep 13</text>
<text transform="translate(472.67,1689.10) rotate(-45)" text-anchor="end" font-size="21" fill="#cad8f8" stroke="#cad8f8" stroke-width="0.35" textLength="70.70" lengthAdjust="spacingAndGlyphs">Sep 14</text>
<text transform="translate(556.53,1689.10) rotate(-45)" text-anchor="end" font-size="21" fill="#cad8f8" stroke="#cad8f8" stroke-width="0.35" textLength="70.76" lengthAdjust="spacingAndGlyphs">Sep 15</text>
<text transform="translate(640.40,1689.10) rotate(-45)" text-anchor="end" font-size="21" fill="#cad8f8" stroke="#cad8f8" stroke-width="0.35" textLength="70.76" lengthAdjust="spacingAndGlyphs">Sep 16</text>
<text transform="translate(724.27,1689.10) rotate(-45)" text-anchor="end" font-size="21" fill="#cad8f8" stroke="#cad8f8" stroke-width="0.35" textLength="70.76" lengthAdjust="spacingAndGlyphs">Sep 17</text>
<text transform="translate(808.13,1689.10) rotate(-45)" text-anchor="end" font-size="21" fill="#cad8f8" stroke="#cad8f8" stroke-width="0.35" textLength="70.76" lengthAdjust="spacingAndGlyphs">Sep 18</text>
<text transform="translate(892.00,1689.10) rotate(-45)" text-anchor="end" font-size="21" fill="#cad8f8" stroke="#cad8f8" stroke-width="0.35" textLength="70.76" lengthAdjust="spacingAndGlyphs">Sep 19</text>
<text transform="translate(975.87,1689.10) rotate(-45)" text-anchor="end" font-size="21" fill="#cad8f8" stroke="#cad8f8" stroke-width="0.35" textLength="70.76" lengthAdjust="spacingAndGlyphs">Sep 20</text>
<text transform="translate(1059.73,1689.10) rotate(-45)" text-anchor="end" font-size="21" fill="#cad8f8" stroke="#cad8f8" stroke-width="0.35" textLength="70.76" lengthAdjust="spacingAndGlyphs">Sep 21</text>
<text transform="translate(1143.60,1689.10) rotate(-45)" text-anchor="end" font-size="21" fill="#cad8f8" stroke="#cad8f8" stroke-width="0.35" textLength="70.76" lengthAdjust="spacingAndGlyphs">Sep 22</text>
<text transform="translate(1227.47,1689.10) rotate(-45)" text-anchor="end" font-size="21" fill="#cad8f8" stroke="#cad8f8" stroke-width="0.35" textLength="70.76" lengthAdjust="spacingAndGlyphs">Sep 23</text>
<text transform="translate(1311.33,1689.10) rotate(-45)" text-anchor="end" font-size="21" fill="#cad8f8" stroke="#cad8f8" stroke-width="0.35" textLength="70.70" lengthAdjust="spacingAndGlyphs">Sep 24</text>
<text transform="translate(1395.20,1689.10) rotate(-45)" text-anchor="end" font-size="21" fill="#cad8f8" stroke="#cad8f8" stroke-width="0.35" textLength="70.76" lengthAdjust="spacingAndGlyphs">Sep 25</text>
<text transform="translate(1479.07,1689.10) rotate(-45)" text-anchor="end" font-size="21" fill="#cad8f8" stroke="#cad8f8" stroke-width="0.35" textLength="70.76" lengthAdjust="spacingAndGlyphs">Sep 26</text>
<text transform="translate(1562.93,1689.10) rotate(-45)" text-anchor="end" font-size="21" fill="#cad8f8" stroke="#cad8f8" stroke-width="0.35" textLength="70.76" lengthAdjust="spacingAndGlyphs">Sep 27</text>
<text transform="translate(1646.80,1689.10) rotate(-45)" text-anchor="end" font-size="21" fill="#cad8f8" stroke="#cad8f8" stroke-width="0.35" textLength="70.76" lengthAdjust="spacingAndGlyphs">Sep 28</text>
<text transform="translate(1730.67,1689.10) rotate(-45)" text-anchor="end" font-size="21" fill="#cad8f8" stroke="#cad8f8" stroke-width="0.35" textLength="70.76" lengthAdjust="spacingAndGlyphs">Sep 29</text>
<text transform="translate(1814.53,1689.10) rotate(-45)" text-anchor="end" font-size="21" fill="#cad8f8" stroke="#cad8f8" stroke-width="0.35" textLength="70.76" lengthAdjust="spacingAndGlyphs">Sep 30</text>
<text transform="translate(1898.40,1689.10) rotate(-45)" text-anchor="end" font-size="21" fill="#cad8f8" stroke="#cad8f8" stroke-width="0.35" textLength="55.42" lengthAdjust="spacingAndGlyphs">Oct 1</text>
<text transform="translate(1982.27,1689.10) rotate(-45)" text-anchor="end" font-size="21" fill="#cad8f8" stroke="#cad8f8" stroke-width="0.35" textLength="55.42" lengthAdjust="spacingAndGlyphs">Oct 2</text>
<text transform="translate(2066.13,1689.10) rotate(-45)" text-anchor="end" font-size="21" fill="#cad8f8" stroke="#cad8f8" stroke-width="0.35" textLength="55.42" lengthAdjust="spacingAndGlyphs">Oct 3</text>
<text transform="translate(2150.00,1689.10) rotate(-45)" text-anchor="end" font-size="21" fill="#cad8f8" stroke="#cad8f8" stroke-width="0.35" textLength="55.32" lengthAdjust="spacingAndGlyphs">Oct 4</text>
<text transform="translate(2233.87,1689.10) rotate(-45)" text-anchor="end" font-size="21" fill="#cad8f8" stroke="#cad8f8" stroke-width="0.35" textLength="55.42" lengthAdjust="spacingAndGlyphs">Oct 5</text>
<text transform="translate(2317.73,1689.10) rotate(-45)" text-anchor="end" font-size="21" fill="#cad8f8" stroke="#cad8f8" stroke-width="0.35" textLength="55.42" lengthAdjust="spacingAndGlyphs">Oct 6</text>
<text transform="translate(2401.60,1689.10) rotate(-45)" text-anchor="end" font-size="21" fill="#cad8f8" stroke="#cad8f8" stroke-width="0.35" textLength="55.42" lengthAdjust="spacingAndGlyphs">Oct 7</text>
<text transform="translate(2485.47,1689.10) rotate(-45)" text-anchor="end" font-size="21" fill="#cad8f8" stroke="#cad8f8" stroke-width="0.35" textLength="55.42" lengthAdjust="spacingAndGlyphs">Oct 8</text>
<text transform="translate(2569.33,1689.10) rotate(-45)" text-anchor="end" font-size="21" fill="#cad8f8" stroke="#cad8f8" stroke-width="0.35" textLength="55.42" lengthAdjust="spacingAndGlyphs">Oct 9</text>
<text transform="translate(2653.20,1689.10) rotate(-45)" text-anchor="end" font-size="21" fill="#cad8f8" stroke="#cad8f8" stroke-width="0.35" textLength="68.66" lengthAdjust="spacingAndGlyphs">Oct 10</text>
<text transform="translate(2737.07,1689.10) rotate(-45)" text-anchor="end" font-size="21" fill="#cad8f8" stroke="#cad8f8" stroke-width="0.35" textLength="68.71" lengthAdjust="spacingAndGlyphs">Oct 11</text>
<text x="1297.20" y="1211.40" font-size="29.5" font-weight="normal" fill="#cad8f8" textLength="333.33" lengthAdjust="spacingAndGlyphs" stroke="#cad8f8" stroke-width="0.35">Token Usage Over Time</text>
<rect x="1314" y="1256.5" width="24" height="24" fill="#6ab05e"/>
<rect x="1534" y="1256.5" width="24" height="24" fill="#5aa0f0"/>
<text x="1365.86" y="1276.10" font-size="20" font-weight="normal" fill="#cad8f8" textLength="129.64" lengthAdjust="spacingAndGlyphs" stroke="#cad8f8" stroke-width="0.35">Input Tokens</text>
<text x="1586.60" y="1276.10" font-size="20" font-weight="normal" fill="#cad8f8" textLength="144.20" lengthAdjust="spacingAndGlyphs" stroke="#cad8f8" stroke-width="0.35">Output Tokens</text>
</svg>
</body></html>
